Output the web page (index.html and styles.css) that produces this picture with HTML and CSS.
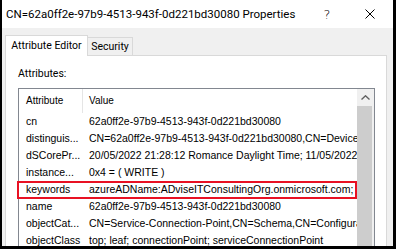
FILE: index.html
```html
<!DOCTYPE html>
<html lang="en">
<head>
    <meta charset="UTF-8">
    <title>Properties</title>
    <link rel="stylesheet" href="styles.css">
</head>
<body>
    <div class="window">
        <!-- Title bar -->
        <div class="titlebar">
            <span class="title">CN=62a0ff2e-97b9-4513-943f-0d221bd30080 Properties</span>
            <span class="title-button help">?</span>
            <span class="title-button close">
                <svg width="10" height="10" viewBox="0 0 10 10">
                    <path d="M0.5 0.5 L9.5 9.5 M9.5 0.5 L0.5 9.5" stroke="#000" stroke-width="1" fill="none"/>
                </svg>
            </span>
        </div>

        <div class="dialog">
            <div class="tabs">
                <div class="tab active">Attribute Editor</div>
                <div class="tab">Security</div>
            </div>

            <div class="panel">
                <div class="label">Attributes:</div>

                <div class="listbox">
                    <div class="list">
                        <div class="list-header">
                            <div class="col-attr">Attribute</div>
                            <div class="col-value">Value</div>
                        </div>
                        <div class="row"><div class="col-attr">cn</div><div class="col-value">62a0ff2e-97b9-4513-943f-0d221bd30080</div></div>
                        <div class="row"><div class="col-attr">distinguis...</div><div class="col-value">CN=62a0ff2e-97b9-4513-943f-0d221bd30080,CN=Devices,CN=Microsoft</div></div>
                        <div class="row"><div class="col-attr">dSCorePr...</div><div class="col-value">20/05/2022 21:28:12 Romance Daylight Time; 11/05/2022</div></div>
                        <div class="row"><div class="col-attr">instance...</div><div class="col-value">0x4 = ( WRITE )</div></div>
                        <div class="row marked"><div class="col-attr">keywords</div><div class="col-value">azureADName:ADviseITConsultingOrg.onmicrosoft.com;</div></div>
                        <div class="row"><div class="col-attr">name</div><div class="col-value">62a0ff2e-97b9-4513-943f-0d221bd30080</div></div>
                        <div class="row"><div class="col-attr">objectCat...</div><div class="col-value">CN=Service-Connection-Point,CN=Schema,CN=Configuration</div></div>
                        <div class="row"><div class="col-attr">objectClass</div><div class="col-value">top; leaf; connectionPoint; serviceConnectionPoint</div></div>
                    </div>

                    <div class="scrollbar">
                        <div class="scroll-arrow">
                            <svg width="9" height="5" viewBox="0 0 9 5">
                                <path d="M0.5 4.5 L4.5 0.8 L8.5 4.5" stroke="#606060" stroke-width="1.4" fill="none"/>
                            </svg>
                        </div>
                        <div class="scroll-thumb"></div>
                    </div>
                </div>
            </div>
        </div>
    </div>
</body>
</html>
```

FILE: styles.css
```css
body {
    margin: 0;
    padding: 0;
    background-color: #000;
    font-family: Roboto, sans-serif;
    color: #000;
}

.window {
    width: 396px;
    height: 249px;
    box-sizing: border-box;
    border-left: 2px solid #000;
    border-right: 3px solid #000;
    border-bottom: 3px solid #000;
    background-color: #f0f0f0;
    overflow: hidden;
    display: flex;
    flex-direction: column;
}

/* Title bar */
.titlebar {
    height: 28px;
    flex-shrink: 0;
    background-color: #fff;
    display: flex;
    align-items: center;
}

.title {
    flex: 1;
    padding-left: 4px;
    font-size: 11.5px;
    white-space: nowrap;
}

.title-button {
    width: 46px;
    height: 28px;
    display: flex;
    align-items: center;
    justify-content: center;
}

.help {
    padding-left: 6px;
    box-sizing: border-box;
    font-size: 13px;
    font-family: "DejaVu Sans", sans-serif;
    font-weight: 200;
}

/* Dialog body */
.dialog {
    flex: 1;
    padding-top: 7px;
    padding-left: 3px;
}

.tabs {
    display: flex;
    align-items: flex-end;
    height: 20px;
}

.tab {
    box-sizing: border-box;
    height: 18px;
    width: 45px;
    border: 1px solid #d9d9d9;
    border-bottom: none;
    border-left: none;
    font-size: 10.5px;
    line-height: 17px;
    text-align: center;
    white-space: nowrap;
    background-color: #f0f0f0;
}

.tab.active {
    width: 83px;
    height: 21px;
    border-left: 1px solid #d9d9d9;
    background-color: #fff;
    line-height: 19px;
    margin-bottom: -1px;
    position: relative;
    z-index: 1;
}

.panel {
    width: 382px;
    height: 200px;
    box-sizing: border-box;
    background-color: #fff;
    border: 1px solid #d9d9d9;
    padding-left: 12px;
}

.label {
    margin-top: 10px;
    height: 16px;
    line-height: 16px;
    font-size: 10.5px;
}

/* List view */
.listbox {
    margin-top: 6px;
    width: 357px;
    height: 170px;
    box-sizing: border-box;
    border: 1px solid #828790;
    display: flex;
}

.list {
    width: 338px;
    font-family: "Liberation Sans", Arial, sans-serif;
    font-size: 10.5px;
}

.list-header {
    display: flex;
    height: 24px;
    line-height: 24px;
    font-size: 10px;
}

.list-header .col-attr {
    width: 56px;
    border-right: 1px solid #e5e5e5;
}

.row {
    display: flex;
    height: 17px;
    line-height: 17px;
    position: relative;
}

.col-attr {
    width: 57px;
    padding-left: 7px;
    flex-shrink: 0;
    white-space: nowrap;
    overflow: hidden;
}

.col-value {
    flex: 1;
    padding-left: 6px;
    white-space: nowrap;
    overflow: hidden;
}

.row.marked::after {
    content: "";
    position: absolute;
    left: -2px;
    top: 0;
    width: 340px;
    height: 18px;
    box-sizing: border-box;
    border: 2px solid #e81123;
}

/* Scrollbar */
.scrollbar {
    width: 17px;
    background-color: #f0f0f0;
    display: flex;
    flex-direction: column;
}

.scroll-arrow {
    height: 17px;
    display: flex;
    align-items: center;
    justify-content: center;
}

.scroll-thumb {
    flex: 1;
    width: 15px;
    background-color: #cdcdcd;
}
```
